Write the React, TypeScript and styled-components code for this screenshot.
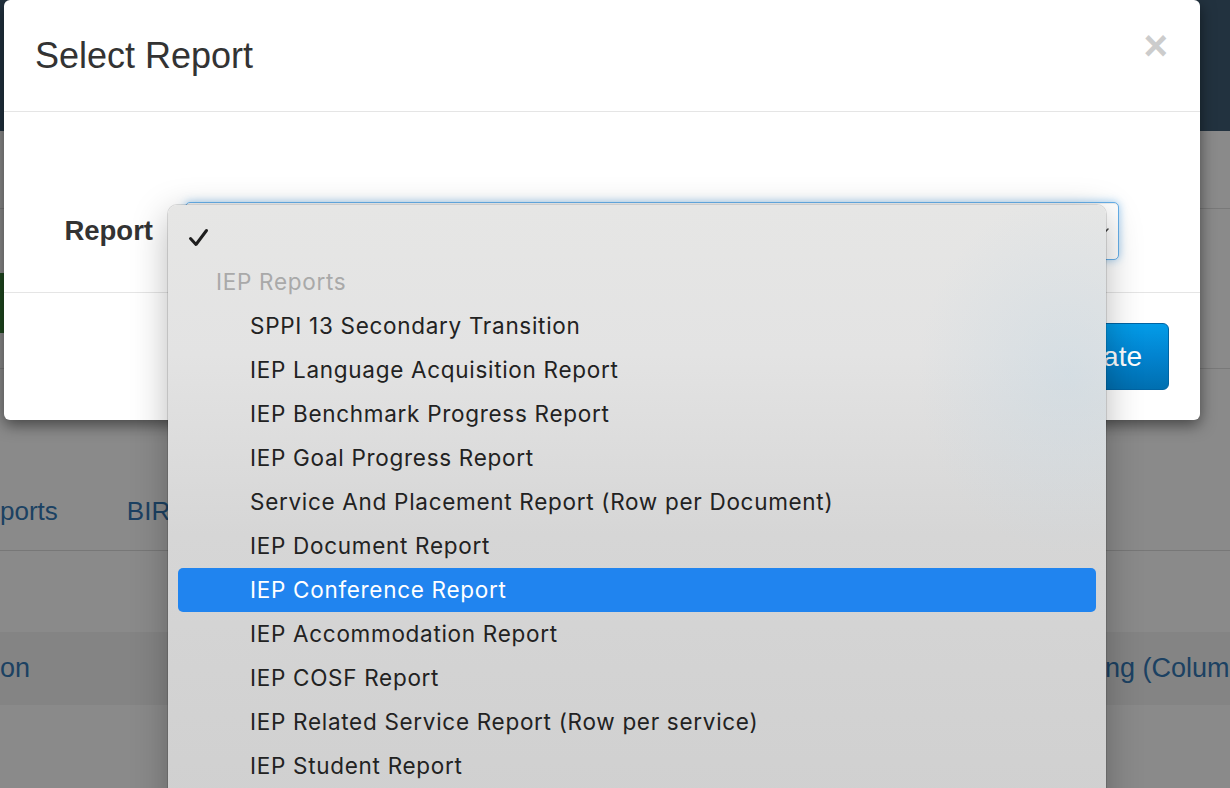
import React from "react";
import styled, { createGlobalStyle } from "styled-components";

const GlobalStyle = createGlobalStyle`
  html, body {
    margin: 0;
    padding: 0;
  }
  body {
    width: 1230px;
    height: 788px;
    overflow: hidden;
    background: #ffffff;
    font-family: "Liberation Sans", Arial, sans-serif;
    color: #333333;
  }
`;

const Page = styled.div`
  position: relative;
  width: 1230px;
  height: 788px;
  overflow: hidden;
`;

const NavBar = styled.div`
  height: 131px;
  background: #3f5d75;
`;

const Toolbar = styled.div`
  height: 77px;
  border-bottom: 1px solid #e0e0e0;
`;

const ActionRow = styled.div`
  height: 95px;
  padding-top: 64px;
  border-bottom: 1px solid #e0e0e0;
`;

const SuccessButton = styled.div`
  width: 140px;
  height: 60px;
  background: #3a873a;
  border-radius: 0 5px 5px 0;
`;

const TabStrip = styled.div`
  height: 157px;
  padding-bottom: 24px;
  display: flex;
  align-items: flex-end;
  gap: 69px;
  border-bottom: 1px solid #dcdcdc;
`;

const TabLink = styled.div`
  font-size: 26px;
  line-height: 30px;
  color: #3579b6;
  white-space: nowrap;
`;

const TableRow = styled.div<{ $striped?: boolean }>`
  height: ${(p) => (p.$striped ? 73 : 81)}px;
  display: grid;
  grid-template-columns: 1105px 1fr;
  align-items: center;
  background: ${(p) => (p.$striped ? "#f4f4f4" : "#ffffff")};
  font-size: 27px;
  color: #3579b6;
  white-space: nowrap;
  overflow: hidden;
`;

const Backdrop = styled.div`
  position: absolute;
  inset: 0;
  background: rgba(0, 0, 0, 0.46);
`;

const Modal = styled.div`
  position: absolute;
  left: 4px;
  top: 0;
  width: 1196px;
  background: #ffffff;
  border-radius: 6px;
  box-shadow: 0 5px 15px rgba(0, 0, 0, 0.5);
`;

const ModalHeader = styled.div`
  height: 75px;
  padding: 36px 32px 0 31px;
  border-bottom: 1px solid #e5e5e5;
  display: flex;
  justify-content: space-between;
  align-items: flex-start;
`;

const Title = styled.h4`
  margin: 0;
  font-size: 36px;
  line-height: 40px;
  font-weight: 400;
  color: #333333;
`;

const CloseButton = styled.span`
  font-size: 42px;
  line-height: 20px;
  font-weight: 700;
  color: #cccccc;
`;

const ModalBody = styled.div`
  height: 58px;
  padding: 90px 81px 32px 0;
  border-bottom: 1px solid #e5e5e5;
  display: grid;
  grid-template-columns: 149px 1fr;
  column-gap: 32px;
  align-items: center;
`;

const FieldLabel = styled.label`
  text-align: right;
  font-size: 27.5px;
  font-weight: 700;
  color: #333333;
`;

const SelectBox = styled.div`
  height: 56px;
  border: 1px solid #66afe9;
  border-radius: 5px;
  background: #ffffff;
  box-shadow: inset 0 1px 1px rgba(0, 0, 0, 0.075),
    0 0 9px rgba(102, 175, 233, 0.65);
  display: flex;
  align-items: center;
  justify-content: flex-end;
  padding-right: 8px;
`;

const ModalFooter = styled.div`
  padding: 30px 31px 30px 31px;
  display: flex;
  justify-content: flex-end;
`;

const PrimaryButton = styled.button`
  height: 67px;
  padding: 0 26px;
  font-family: "Liberation Sans", Arial, sans-serif;
  font-size: 28px;
  color: #ffffff;
  background: linear-gradient(180deg, #039ce8 0%, #0283cf 50%, #006fb0 100%);
  border: 1px solid #0064a3;
  border-radius: 6px;
`;

const Menu = styled.div`
  position: absolute;
  left: 168px;
  top: 205px;
  width: 918px;
  height: 600px;
  padding: 11px 10px 0 10px;
  border-radius: 9px 9px 0 0;
  background: radial-gradient(
      ellipse 200px 240px at 900px 170px,
      rgba(192, 214, 228, 0.38),
      rgba(192, 214, 228, 0) 75%
    ),
    linear-gradient(
      180deg,
      #e6e6e5 0px,
      #e3e3e3 150px,
      #d6d6d6 330px,
      #d0d0d0 600px
    );
  box-shadow: 0 0 0 1px rgba(0, 0, 0, 0.12), 0 10px 36px rgba(0, 0, 0, 0.28);
  font-family: Inter, "Noto Sans", sans-serif;
`;

const MenuRow = styled.div<{ $indent: number; $active?: boolean; $muted?: boolean }>`
  height: 44px;
  display: flex;
  align-items: center;
  padding-left: ${(p) => p.$indent}px;
  padding-bottom: 1px;
  box-sizing: border-box;
  border-radius: 5px;
  font-size: 22.5px;
  letter-spacing: 0.7px;
  white-space: nowrap;
  background: ${(p) => (p.$active ? "#2084ef" : "transparent")};
  color: ${(p) => (p.$active ? "#ffffff" : p.$muted ? "#a9a9a9" : "#222222")};
`;

const reports = [
  "SPPI 13 Secondary Transition",
  "IEP Language Acquisition Report",
  "IEP Benchmark Progress Report",
  "IEP Goal Progress Report",
  "Service And Placement Report (Row per Document)",
  "IEP Document Report",
  "IEP Conference Report",
  "IEP Accommodation Report",
  "IEP COSF Report",
  "IEP Related Service Report (Row per service)",
  "IEP Student Report",
];

export default function App() {
  return (
    <>
      <GlobalStyle />
      <Page>
        <NavBar />
        <Toolbar />
        <ActionRow>
          <SuccessButton />
        </ActionRow>
        <TabStrip>
          <TabLink>ports</TabLink>
          <TabLink>BIR Reports</TabLink>
        </TabStrip>
        <TableRow />
        <TableRow $striped>
          <span>on</span>
          <span>ng (Colum</span>
        </TableRow>
        <TableRow />

        <Backdrop />

        <Modal>
          <ModalHeader>
            <Title>Select Report</Title>
            <CloseButton>×</CloseButton>
          </ModalHeader>
          <ModalBody>
            <FieldLabel>Report</FieldLabel>
            <SelectBox>
              <svg width="12" height="12" viewBox="0 0 12 12">
                <path
                  d="M2 4 L6 8 L10 4"
                  fill="none"
                  stroke="#444"
                  strokeWidth="1.6"
                  strokeLinecap="round"
                />
              </svg>
            </SelectBox>
          </ModalBody>
          <ModalFooter>
            <PrimaryButton>Generate</PrimaryButton>
          </ModalFooter>
        </Modal>

        <Menu>
          <MenuRow $indent={10}>
            <svg width="21" height="19" viewBox="0 0 21 19">
              <path
                d="M2.5 10.5 L8 16.5 L18.5 2.5"
                fill="none"
                stroke="#1e1e1e"
                strokeWidth="3"
                strokeLinecap="round"
                strokeLinejoin="round"
              />
            </svg>
          </MenuRow>
          <MenuRow $indent={38} $muted>
            IEP Reports
          </MenuRow>
          {reports.map((r) => (
            <MenuRow key={r} $indent={72} $active={r === "IEP Conference Report"}>
              {r}
            </MenuRow>
          ))}
        </Menu>
      </Page>
    </>
  );
}
